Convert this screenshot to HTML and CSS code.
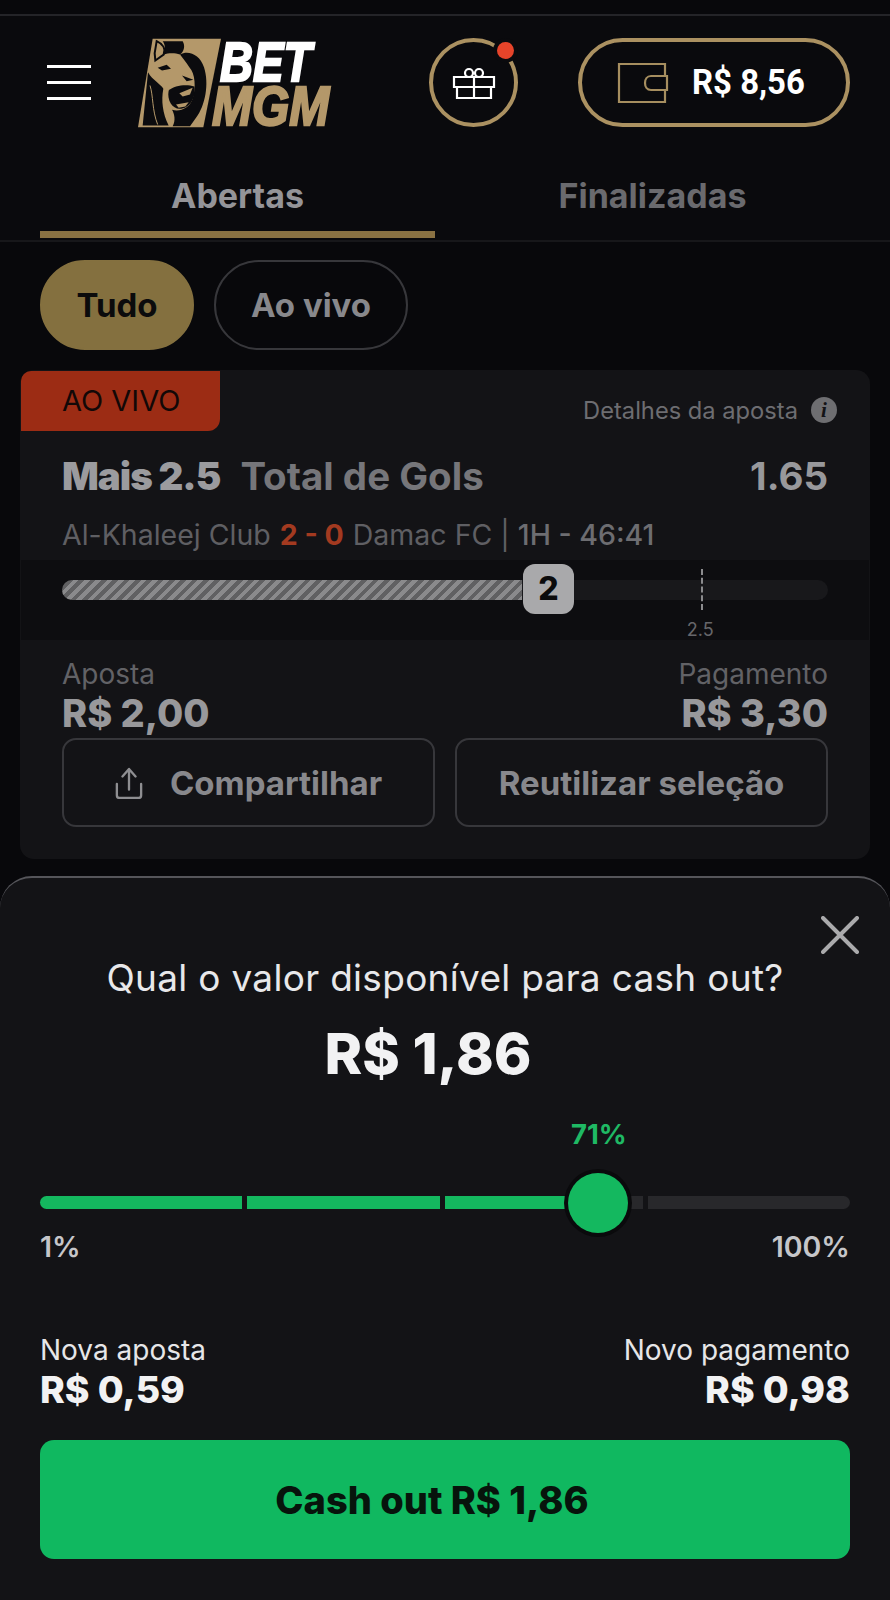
FILE: index.html
```html
<!DOCTYPE html>
<html lang="pt-BR">
<head>
    <meta charset="UTF-8">
    <title>Minhas apostas</title>
    <link rel="stylesheet" href="styles.css">
</head>
<body>
<div class="page">
    <header class="topbar">
        <div class="burger"><span></span><span></span><span></span></div>
        <svg class="logo" viewBox="410 110 600 275" width="200" height="92">
            <polygon points="460,115 665,115 612,380 416,380" fill="#b4986a"/>
            <!-- lion, drawn from a crop 390px left and 90px above the logo -->
            <g transform="translate(390 90)">
                <path class="lion" d="M56 125 C70 150 95 160 102 175 C95 210 100 250 118 285 L40 285 Z"/>
                <path class="lion-line" d="M62 165 C72 195 68 240 85 282"/>
                <path class="lion" d="M100 32 L160 32 C168 45 165 62 152 72 C135 66 115 68 104 72 C108 55 108 42 100 32 Z"/>
                <path class="lion-ear" d="M82 32 C100 40 110 55 103 72 L78 90 L76 68 Z"/>
                <path class="lion" d="M152 72 C180 58 212 75 224 110 C240 160 228 225 200 262 L182 287 L130 287 C140 270 135 250 128 238 C150 245 180 235 190 205 C200 170 198 130 180 110 C170 95 160 82 152 72 Z"/>
                <path class="lion" d="M118 180 C135 165 170 160 195 168 C200 200 182 235 150 235 C130 235 112 210 118 180 Z"/>
                <path class="lion-gold" d="M150 188 L190 172 L182 192 L160 198 Z M140 222 L178 215 L168 228 L148 232 Z"/>
                <path class="lion" d="M85 112 L112 103 L125 115 L98 120 Z M158 135 L192 148 L172 152 Z"/>
            </g>
            <text class="logo-bet" x="662" y="242" textLength="274" lengthAdjust="spacingAndGlyphs">BET</text>
            <text class="logo-mgm" x="638" y="374" textLength="352" lengthAdjust="spacingAndGlyphs">MGM</text>
        </svg>
        <div class="gift">
            <svg viewBox="0 0 44 32" width="44" height="32">
                <circle cx="17" cy="6" r="4" class="ico"/>
                <circle cx="27" cy="6" r="4" class="ico"/>
                <path d="M2 10 H42 V20 H2 Z M5 20 V31 H39 V20 M22 10 V31" class="ico"/>
            </svg>
            <span class="gift-dot"></span>
        </div>
        <div class="wallet">
            <svg viewBox="0 0 52 42" width="52" height="42">
                <path d="M48 14 V2 H2 V40 H48 V28" class="ico-gold"/>
                <path d="M50 14 H34 C26 14 26 28 34 28 H50 Z" class="ico-gold"/>
            </svg>
            <span class="wallet-value">R$ 8,56</span>
        </div>
    </header>

    <nav class="tabs">
        <div class="tab tab-on">Abertas</div>
        <div class="tab">Finalizadas</div>
    </nav>

    <div class="chips">
        <div class="chip chip-on">Tudo</div>
        <div class="chip">Ao vivo</div>
    </div>

    <section class="card">
        <div class="card-head">
            <div class="live-tag">AO VIVO</div>
            <div class="details">Detalhes da aposta <span class="info">i</span></div>
        </div>
        <div class="bet-row">
            <div class="bet-name"><b>Mais 2.5</b><span>Total de Gols</span></div>
            <div class="odd">1.65</div>
        </div>
        <div class="match">Al-Khaleej Club <b>2 - 0</b> Damac FC | <em>1H - 46:41</em></div>
        <div class="tracker">
            <div class="track">
                <div class="track-fill" style="width: 60%"></div>
                <div class="score-pin" style="left: 60.3%">2</div>
                <div class="goal-line" style="left: 83.4%"><span>2.5</span></div>
            </div>
        </div>
        <div class="money-row">
            <div>
                <div class="money-label">Aposta</div>
                <div class="money-value">R$ 2,00</div>
            </div>
            <div class="right">
                <div class="money-label">Pagamento</div>
                <div class="money-value">R$ 3,30</div>
            </div>
        </div>
        <div class="card-btns">
            <div class="line-btn">
                <svg viewBox="0 0 30 34" width="28" height="32">
                    <path d="M15 24 V3 M8 10 L15 2 L22 10 M2 18 V30 Q2 33 5 33 H25 Q28 33 28 30 V18" class="ico-grey"/>
                </svg>
                Compartilhar
            </div>
            <div class="line-btn">Reutilizar seleção</div>
        </div>
    </section>

    <section class="sheet">
        <svg class="close" viewBox="0 0 38 38" width="38" height="38">
            <path d="M2 2 L36 36 M36 2 L2 36"/>
        </svg>
        <div class="sheet-title">Qual o valor disponível para cash out?</div>
        <div class="sheet-amount">R$ 1,86</div>
        <div class="slider">
            <div class="pct" style="left: 69%">71%</div>
            <div class="segs">
                <div class="seg seg-first seg-full"></div>
                <div class="seg seg-mid seg-full"></div>
                <div class="seg seg-third"><div class="seg-fill" style="width: 77%"></div></div>
                <div class="seg seg-last"></div>
            </div>
            <div class="thumb" style="left: 68.9%"></div>
            <div class="scale"><span>1%</span><span>100%</span></div>
        </div>
        <div class="new-row">
            <div>
                <div class="new-label">Nova aposta</div>
                <div class="new-value">R$ 0,59</div>
            </div>
            <div class="right">
                <div class="new-label">Novo pagamento</div>
                <div class="new-value">R$ 0,98</div>
            </div>
        </div>
        <div class="cash-btn">Cash out R$ 1,86</div>
    </section>
</div>
</body>
</html>
```

FILE: styles.css
```css
* {
    box-sizing: border-box;
}

body {
    margin: 0;
    background: #08080b;
    font-family: "Inter", "Liberation Sans", sans-serif;
}

.page {
    width: 890px;
    height: 1600px;
    padding-top: 14px;
    overflow: hidden;
}

.right {
    text-align: right;
}

/* header */
.topbar {
    height: 113px;
    padding: 22px 40px 0 47px;
    border-top: 2px solid #242428;
    display: flex;
    align-items: flex-start;
    background: #0a0a0d;
}

.burger {
    width: 45px;
    margin-top: 27px;
    display: flex;
    flex-direction: column;
    gap: 13px;
}

.burger span {
    height: 3px;
    background: #fff;
}

.logo {
    margin-left: 45px;
    margin-top: -1px;
    flex: none;
    overflow: visible;
}

.lion {
    fill: #0b0b0e;
}

.lion-gold {
    fill: #b4986a;
}

.lion-line {
    fill: none;
    stroke: #b4986a;
    stroke-width: 3;
}

.lion-ear {
    fill: none;
    stroke: #0b0b0e;
    stroke-width: 6;
}

.logo-bet,
.logo-mgm {
    font-family: "Liberation Sans", sans-serif;
    font-weight: 700;
    font-style: italic;
    font-size: 168px;
    stroke-width: 7px;
}

.logo-bet {
    fill: #fff;
    stroke: #fff;
}

.logo-mgm {
    fill: #b4986a;
    stroke: #b4986a;
}

.gift {
    width: 89px;
    height: 89px;
    margin-left: 93px;
    flex: none;
    border: 4px solid #ab9161;
    border-radius: 50%;
    position: relative;
    display: flex;
    align-items: center;
    justify-content: center;
}

.ico,
.ico-gold,
.ico-grey {
    fill: none;
    stroke-width: 2.2;
}

.ico {
    stroke: #fff;
}

.ico-gold {
    stroke: #a68e5f;
}

.ico-grey {
    stroke: #8e8e91;
    stroke-width: 2.5;
    stroke-linecap: round;
    stroke-linejoin: round;
}

.gift-dot {
    position: absolute;
    top: 0;
    right: 0;
    width: 17px;
    height: 17px;
    border-radius: 50%;
    background: #e6442a;
    box-shadow: 0 0 0 4px #0a0a0d;
}

.wallet {
    width: 272px;
    height: 89px;
    margin-left: 60px;
    flex: none;
    border: 4px solid #ab9161;
    border-radius: 45px;
    padding-left: 35px;
    display: flex;
    align-items: center;
    gap: 23px;
}

.wallet-value {
    font-family: "Roboto", sans-serif;
    font-weight: 700;
    font-size: 35px;
    color: #fff;
    display: inline-block;
    transform: scaleX(.94);
    transform-origin: left center;
    white-space: nowrap;
}

/* tabs */
.tabs {
    height: 113px;
    padding: 0 40px;
    display: grid;
    grid-template-columns: 1fr 1fr;
    gap: 20px;
    background: #0a0a0d;
    box-shadow: 0 2px 0 #17171a;
}

.tab {
    height: 111px;
    padding-top: 46px;
    text-align: center;
    font-size: 34px;
    line-height: 46px;
    font-weight: 700;
    color: #6a6a6e;
}

.tab-on {
    color: #949498;
    border-bottom: 7px solid #8a7243;
}

/* filter chips */
.chips {
    margin-top: 20px;
    padding-left: 40px;
    display: flex;
    gap: 20px;
}

.chip {
    height: 90px;
    width: 194px;
    border: 2px solid #37373b;
    border-radius: 45px;
    display: flex;
    align-items: center;
    justify-content: center;
    font-size: 33px;
    font-weight: 700;
    color: #88888c;
}

.chip-on {
    width: 154px;
    background: #84703f;
    border-color: #84703f;
    color: #0b0b0c;
}

/* bet card */
.card {
    height: 489px;
    margin: 20px 20px 0;
    padding: 1px;
    border-radius: 14px;
    background: #131316;
}

.card-head {
    height: 60px;
    display: flex;
    justify-content: space-between;
}

.live-tag {
    width: 199px;
    padding-left: 41px;
    border-radius: 10px 0 12px 0;
    background: #9c2c14;
    color: #120807;
    font-size: 29px;
    line-height: 60px;
}

.details {
    margin-right: 32px;
    margin-top: 24px;
    display: flex;
    align-items: center;
    gap: 13px;
    height: 30px;
    font-size: 23.7px;
    color: #6d6d71;
}

.info {
    width: 26px;
    height: 26px;
    border-radius: 50%;
    background: #6e6e71;
    color: #131316;
    text-align: center;
    font-family: "Liberation Serif", serif;
    font-style: italic;
    font-weight: 700;
    font-size: 21px;
    line-height: 26px;
}

.bet-row {
    margin-top: 23px;
    padding: 0 41px 0 41px;
    height: 44px;
    display: flex;
    justify-content: space-between;
    font-size: 38.5px;
    line-height: 44px;
    font-weight: 700;
}

.bet-name b {
    color: #9b9b9e;
    margin-right: 20px;
    letter-spacing: -1px;
}

.bet-name span {
    color: #76767a;
}

.odd {
    color: #98989b;
}

.match {
    margin-top: 20px;
    padding: 0 41px;
    font-size: 28.5px;
    line-height: 34px;
    color: #5f5f63;
    white-space: nowrap;
}

.match b {
    color: #a33a20;
    margin: 0 1px;
}

.match em {
    font-style: normal;
    font-weight: 500;
    color: #6d6d71;
}

.tracker {
    height: 80px;
    margin-top: 8px;
    padding: 20px 41px 0;
    background: #0d0d10;
}

.track {
    height: 20px;
    border-radius: 10px;
    background: #18181b;
    position: relative;
}

.track-fill {
    height: 100%;
    border-radius: 10px 0 0 10px;
    background: repeating-linear-gradient(135deg, #8a8a8c 0 4px, #606062 4px 8px);
}

.score-pin {
    position: absolute;
    top: -16px;
    width: 51px;
    height: 50px;
    margin-left: -1px;
    border-radius: 12px;
    background: #a9a9ab;
    color: #0b0b0c;
    font-size: 32px;
    font-weight: 800;
    line-height: 50px;
    text-align: center;
}

.goal-line {
    position: absolute;
    top: -11px;
    height: 41px;
    border-left: 2px dashed #8b8b8e;
}

.goal-line span {
    position: absolute;
    top: 50px;
    left: -16px;
    font-size: 18px;
    line-height: 22px;
    color: #66666a;
}

.money-row {
    margin-top: 16px;
    padding: 0 41px;
    display: flex;
    justify-content: space-between;
}

.money-label {
    font-size: 28px;
    line-height: 36px;
    color: #626266;
}

.money-value {
    font-size: 38px;
    line-height: 42px;
    font-weight: 800;
    color: #98989b;
}

.card-btns {
    margin-top: 4px;
    padding: 0 41px;
    display: flex;
    gap: 20px;
}

.line-btn {
    flex: 1;
    height: 89px;
    padding-top: 1px;
    border: 2px solid #37373b;
    border-radius: 14px;
    display: flex;
    align-items: center;
    justify-content: center;
    gap: 27px;
    font-size: 33px;
    font-weight: 700;
    color: #88888c;
}

/* cash out sheet */
.sheet {
    height: 725px;
    margin-top: 17px;
    padding: 79px 40px 0;
    border-top: 2px solid #55555a;
    border-radius: 32px 32px 0 0;
    background: #131316;
    position: relative;
}

.close {
    position: absolute;
    top: 38px;
    right: 31px;
    stroke: #aaaaac;
    stroke-width: 4;
    stroke-linecap: round;
}

.sheet-title {
    text-align: center;
    font-size: 37px;
    line-height: 42px;
    letter-spacing: .3px;
    color: #e8e8ea;
    white-space: nowrap;
}

.sheet-amount {
    margin-top: 23px;
    padding-right: 34px;
    text-align: center;
    font-size: 57px;
    line-height: 64px;
    font-weight: 800;
    color: #f2f2f3;
}

.slider {
    margin-top: 32px;
    padding-top: 78px;
    position: relative;
}

.pct {
    position: absolute;
    top: 0;
    transform: translateX(-50%);
    font-size: 27.5px;
    line-height: 32px;
    font-weight: 700;
    color: #1fb964;
}

.segs {
    display: flex;
    gap: 5px;
    height: 13px;
}

.seg {
    width: 202px;
    background: #28282b;
}

.seg-mid {
    width: 193px;
}

.seg-third {
    width: 198px;
}

.seg-full,
.seg-fill {
    background: #14b85f;
    height: 100%;
}

.seg-first {
    border-radius: 7px 0 0 7px;
}

.seg-last {
    border-radius: 0 7px 7px 0;
}

.thumb {
    position: absolute;
    top: 55px;
    width: 60px;
    height: 60px;
    margin-left: -30px;
    border-radius: 50%;
    background: #14b85f;
    box-shadow: 0 0 0 4px #0a0a0c;
}

.scale {
    margin-top: 22px;
    display: flex;
    justify-content: space-between;
    font-size: 28.5px;
    line-height: 32px;
    font-weight: 600;
    color: #c6c6c9;
}

.new-row {
    margin-top: 71px;
    display: flex;
    justify-content: space-between;
}

.new-label {
    font-size: 28px;
    line-height: 32px;
    color: #e6e6e8;
}

.new-value {
    margin-top: 4px;
    font-size: 37.5px;
    line-height: 40px;
    font-weight: 800;
    color: #f2f2f3;
}

.cash-btn {
    margin-top: 30px;
    height: 119px;
    padding-right: 26px;
    border-radius: 14px;
    background: #10b860;
    display: flex;
    align-items: center;
    justify-content: center;
    font-size: 38px;
    font-weight: 800;
    color: #07140c;
}
```
